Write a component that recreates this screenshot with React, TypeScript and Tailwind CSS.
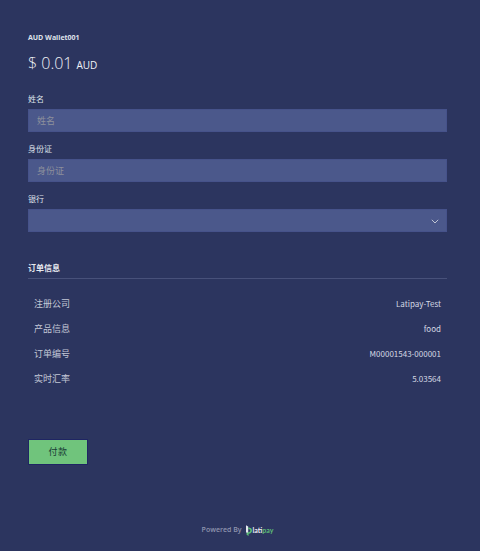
const fields = [
  { id: "name", label: "姓名" },
  { id: "idcard", label: "身份证" },
];

const order = [
  { label: "注册公司", value: "Latipay-Test" },
  { label: "产品信息", value: "food" },
  { label: "订单编号", value: "M00001543-000001" },
  { label: "实时汇率", value: "5.03564" },
];

const labelClass = "block h-4 text-[8px] leading-4 font-normal text-[#dfe2ea]";
const controlClass =
  "block h-[23px] w-full appearance-none rounded-none border border-[#46528a] bg-[#4b588b] px-2 text-[9px] text-[#d5d8e3] outline-none placeholder:text-[#8d909c]";

function Logo() {
  return (
    <span className="flex items-center gap-px" aria-label="latipay">
      <svg width="6" height="11" viewBox="0 0 6 11" aria-hidden="true">
        <path d="M0 0.3L2.2 1.6V8L0 7.5Z" fill="#e4e8ef" />
        <path
          d="M2.2 2.5C4.8 2.5 6 3.7 6 5.5S4.8 8.7 2.6 8.7V10.9L0.6 9.8V7.8H2.2V7H2.7C3.8 7 4.3 6.4 4.3 5.5S3.7 4.2 2.2 4.2Z"
          fill="#5dbd77"
        />
      </svg>
      <span className="font-['Lato','Liberation_Sans',sans-serif] text-[7px] leading-3 font-bold text-[#eceef4]">
        lati<span className="text-[#5dbd77]">pay</span>
      </span>
    </span>
  );
}

export default function App() {
  return (
    <main className="min-h-screen bg-[#2c355f] pt-[30px] pr-[33px] pb-3 pl-7 font-['Noto_Sans_CJK_SC',sans-serif] text-[#d5d8e3]">
      <h1 className="font-['Open_Sans',sans-serif] text-[7px] leading-4 font-bold text-[#dfe2ea]">
        AUD Wallet001
      </h1>
      <p className="mt-[3px] flex items-baseline gap-1 font-['Open_Sans',sans-serif] text-[16px] leading-7 text-[#f1f3f7]">
        <span className="font-light">$ 0.01</span>
        <span className="text-[10px]">AUD</span>
      </p>

      <form>
        <div className="mt-3 flex flex-col gap-[9px]">
          {fields.map((f) => (
            <div key={f.id} className="flex flex-col gap-[2px]">
              <label htmlFor={f.id} className={labelClass}>
                {f.label}
              </label>
              <input id={f.id} type="text" placeholder={f.label} className={controlClass} />
            </div>
          ))}
          <div className="flex flex-col gap-[2px]">
            <label htmlFor="bank" className={labelClass}>
              银行
            </label>
            <div className="relative">
              <select id="bank" defaultValue="" className={controlClass}>
                <option value=""></option>
              </select>
              <svg
                className="pointer-events-none absolute top-[10px] right-2"
                width="8"
                height="5"
                viewBox="0 0 8 5"
                fill="none"
                stroke="#c0c5d3"
                aria-hidden="true"
              >
                <path d="M0.8 0.8L4 4L7.2 0.8" />
              </svg>
            </div>
          </div>
        </div>

        <section className="mt-7">
          <h2 className="border-b border-[#48517a] pb-[3px] text-[8px] leading-[15px] font-bold text-[#e6e8ef]">
            订单信息
          </h2>
          <table className="mt-3 w-full">
            <tbody>
              {order.map((row) => (
                <tr key={row.label} className="h-[25px]">
                  <th scope="row" className="pl-[6px] text-left text-[9px] leading-4 font-normal text-[#c3c7d6]">
                    {row.label}
                  </th>
                  <td className="pr-[6px] text-right text-[8px] leading-4 text-[#d5d8e3]">{row.value}</td>
                </tr>
              ))}
            </tbody>
          </table>
        </section>

        <button
          type="button"
          className="mt-12 block h-[26px] w-[60px] border border-[#1f2563] bg-[#70c47c] text-[9px] tracking-wider text-[#173c36]"
        >
          付款
        </button>
      </form>

      <footer className="mt-[59px] flex items-center justify-center gap-1">
        <span className="font-['Open_Sans',sans-serif] text-[7px] leading-3 font-semibold text-[#8e94ae]">
          Powered By
        </span>
        <Logo />
      </footer>
    </main>
  );
}
